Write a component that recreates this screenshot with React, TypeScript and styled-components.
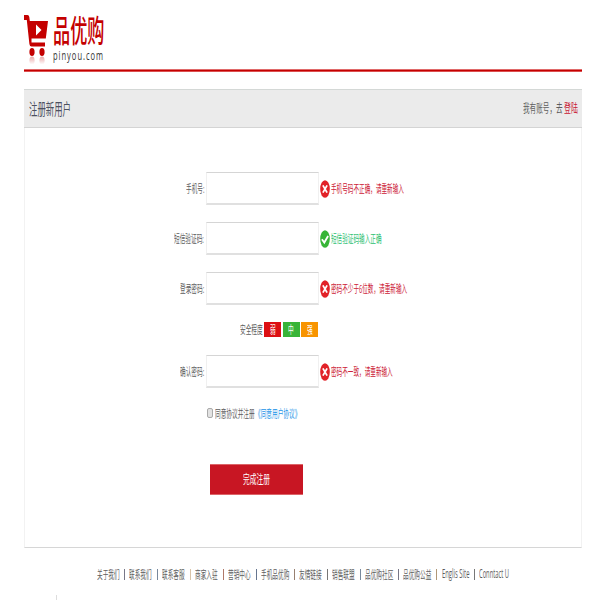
import React from "react";
import styled, { createGlobalStyle } from "styled-components";

const GlobalStyle = createGlobalStyle`
  * { box-sizing: border-box; }
  body {
    margin: 0;
    background: #fff;
    overflow: hidden;
    font-family: "Open Sans", "Noto Sans CJK SC", sans-serif;
    color: #5c5c5c;
  }
`;

const Page = styled.div`
  width: 600px;
  height: 600px;
  padding: 0 18px 0 24px;
  display: flex;
  flex-direction: column;
  overflow: hidden;
`;

/* Condensed text: the slot keeps the narrow width, the glyphs are scaled into it. */
const Slot = styled.span<{ $w: number; $size: number; $color?: string }>`
  display: block;
  flex: none;
  width: ${(p) => p.$w}px;
  height: ${(p) => p.$size + 4}px;
  line-height: ${(p) => p.$size + 4}px;
  font-size: ${(p) => p.$size}px;
  color: ${(p) => p.$color ?? "inherit"};
  white-space: nowrap;
`;

const Glyphs = styled.span<{ $scale: number }>`
  display: inline-block;
  vertical-align: top;
  transform: scaleX(${(p) => p.$scale});
  transform-origin: left center;
`;

type TextProps = { children: string; w: number; size?: number; scale?: number; color?: string };

const Narrow = ({ children, w, size = 11, scale = 0.515, color }: TextProps) => (
  <Slot $w={w} $size={size} $color={color}>
    <Glyphs $scale={scale}>{children}</Glyphs>
  </Slot>
);

const Header = styled.header`
  height: 72px;
  flex: none;
  padding-top: 14px;
  display: flex;
  border-bottom: 1px solid #dc5050;
  box-shadow: inset 0 -1px #c40000, inset 0 -2px #e06a6a;
`;

const Brand = styled.div`
  margin-left: 3.5px;
  display: flex;
  flex-direction: column;
`;

const BrandName = styled.div`
  height: 32px;
  padding-top: 2px;
  color: #c40000;
  font-weight: 500;
  span { height: 29px; line-height: 29px; }
`;

const Domain = styled.div`
  margin-top: 1px;
  letter-spacing: 1.7px;
`;

const Panel = styled.main`
  margin-top: 17px;
  height: 459px;
  flex: none;
  border: 1px solid #f2f2f2;
  border-bottom: 1px solid #d6d6d6;
  border-top: 0;
`;

const PanelHead = styled.div`
  height: 39px;
  margin: 0 -1px;
  padding: 0 4px 0 4.5px;
  display: flex;
  align-items: center;
  justify-content: space-between;
  background: #ebebeb;
  border-top: 1px solid #d4d8d6;
  border-bottom: 1px solid #d4d4d4;
`;

const Login = styled.div`
  display: flex;
  gap: 2px;
`;

const Form = styled.form`
  padding-top: 44px;
`;

const Field = styled.div<{ $gap: number }>`
  height: 33px;
  margin-bottom: ${(p) => p.$gap}px;
  display: flex;
  align-items: center;
`;

const Label = styled.label`
  width: 181px;
  padding-right: 2px;
  display: flex;
  justify-content: flex-end;
`;

const Input = styled.input`
  width: 113px;
  height: 33px;
  padding: 0 4px;
  border: 1px solid #f0f0f0;
  border-top: 1px solid #d5d5d5;
  border-bottom: 2px solid #e0e0e0;
  background: #fff;
  outline: none;
`;

const Hint = styled.div`
  margin-left: 1px;
  display: flex;
  align-items: center;
  gap: 1px;
`;

const Strength = styled.div`
  height: 15px;
  margin: 17px 0 18px;
  padding-left: 215px;
  display: flex;
  align-items: center;
`;

const Level = styled.span<{ $bg: string }>`
  width: 17px;
  height: 15px;
  margin-left: 1.5px;
  padding-left: 5.5px;
  display: flex;
  align-items: center;
  background: ${(p) => p.$bg};
`;

const Agree = styled.div`
  height: 14px;
  margin-top: 18px;
  padding-left: 182px;
  display: flex;
  align-items: center;
`;

const Check = styled.span`
  width: 6px;
  height: 10px;
  margin-right: 2px;
  border: 1px solid #aaa;
  border-radius: 2px;
  background: #e2e2e2;
`;

const Submit = styled.button`
  width: 93px;
  height: 31px;
  margin: 44px 0 0 185px;
  padding: 0;
  display: flex;
  align-items: center;
  justify-content: center;
  border: 0;
  border-top: 1px solid #dc6468;
  border-bottom: 1px solid #dc6468;
  background: #c81623;
  font-family: inherit;
  text-align: left;
`;

const Footer = styled.footer`
  margin-top: 18px;
  padding-left: 72.5px;
  display: flex;
  align-items: center;
`;

const Item = styled.div`
  display: flex;
  align-items: center;
`;

const Bar = styled.i<{ $color: string }>`
  width: 1px;
  height: 11px;
  margin: 0 4.3px 0 4.5px;
  background: ${(p) => p.$color};
`;

const Tick = styled.i`
  width: 1px;
  height: 5px;
  margin: auto 0 0 32px;
  background: #ddd;
`;

const CartLogo = () => (
  <svg width="25" height="51" viewBox="0 0 25 51">
    <defs>
      <linearGradient id="fade" x1="0" y1="0" x2="0" y2="1">
        <stop offset="0" stopColor="#c40000" stopOpacity=".35" />
        <stop offset="1" stopColor="#c40000" stopOpacity="0" />
      </linearGradient>
    </defs>
    <path d="M0 1H3.5Q5 1 5.3 3L5.8 7H24L21.8 24.5H7.5V28.5H21V32.5H7.5Q5.7 32.5 5.4 30L2.8 6H0Z" fill="#c40000" />
    <path d="M12 10.5L17.5 16L12 21.5Z" fill="#fff" />
    <ellipse cx="8" cy="38" rx="2.6" ry="4.1" fill="#c40000" />
    <ellipse cx="18" cy="38" rx="2.6" ry="4.1" fill="#c40000" />
    <ellipse cx="8" cy="46.5" rx="2.6" ry="4" fill="url(#fade)" />
    <ellipse cx="18" cy="46.5" rx="2.6" ry="4" fill="url(#fade)" />
  </svg>
);

const StatusIcon = ({ ok }: { ok?: boolean }) => (
  <svg width="10" height="18" viewBox="0 0 10 18">
    <ellipse cx="5" cy="9" rx="4.8" ry="8.8" fill={ok ? "#36b536" : "#e12228"} />
    <path
      d={ok ? "M1.9 9.2L4.3 12.5L8.1 6" : "M2.9 5.4L7.1 12.6M7.1 5.4L2.9 12.6"}
      fill="none"
      stroke="#fff"
      strokeWidth="1.8"
    />
  </svg>
);

type RowProps = { label: string; labelWidth: number; hint: string; hintWidth: number; ok?: boolean; gap: number };

const FormRow = ({ label, labelWidth, hint, hintWidth, ok, gap }: RowProps) => (
  <Field $gap={gap}>
    <Label>
      <Narrow w={labelWidth}>{label}</Narrow>
    </Label>
    <Input />
    <Hint>
      <StatusIcon ok={ok} />
      <Narrow w={hintWidth} scale={0.51} color={ok ? "#2cc070" : "#cc1834"}>{hint}</Narrow>
    </Hint>
  </Field>
);

const links = [
  { text: "关于我们", w: 23, bar: "#778" },
  { text: "联系我们", w: 23.2, bar: "#78889c" },
  { text: "联系客服", w: 23, bar: "#d8c3a8" },
  { text: "商家入驻", w: 23.2, bar: "#b07868" },
  { text: "营销中心", w: 23, bar: "#667690" },
  { text: "手机品优购", w: 28.7, bar: "#988070" },
  { text: "友情链接", w: 23, bar: "#777" },
  { text: "销售联盟", w: 23, bar: "#78889c" },
  { text: "品优购社区", w: 28.5, bar: "#778" },
  { text: "品优购公益", w: 28.5, bar: "#b09878" },
  { text: "Englis Site", w: 27.7, bar: "#777", scale: 0.49, size: 12 },
  { text: "Conntact U", w: 30, scale: 0.48, size: 12 },
];

export default function App() {
  return (
    <>
      <GlobalStyle />
      <Page>
        <Header>
          <CartLogo />
          <Brand>
            <BrandName>
              <Narrow w={51} size={31} scale={0.553}>品优购</Narrow>
            </BrandName>
            <Domain>
              <Narrow w={51} size={13} scale={0.58} color="#333">pinyou.com</Narrow>
            </Domain>
          </Brand>
        </Header>
        <Panel>
          <PanelHead>
            <Narrow w={42} size={16} scale={0.525} color="#4c5060">注册新用户</Narrow>
            <Login>
              <Narrow w={39} size={12} scale={0.55}>我有账号，去</Narrow>
              <Narrow w={14} size={12} scale={0.58} color="#c81632">登陆</Narrow>
            </Login>
          </PanelHead>
          <Form>
            <FormRow label="手机号:" labelWidth={18.5} hint="手机号码不正确，请重新输入" hintWidth={74} gap={17} />
            <FormRow label="短信验证码:" labelWidth={29.8} hint="短信验证码输入正确" hintWidth={51} ok gap={17} />
            <FormRow label="登录密码:" labelWidth={24.2} hint="密码不少于6位数，请重新输入" hintWidth={77} gap={0} />
            <Strength>
              <Narrow w={22.5}>安全程度</Narrow>
              <Level $bg="#dc1014"><Narrow w={6} color="#fff">弱</Narrow></Level>
              <Level $bg="#38b438"><Narrow w={6} color="#fff">中</Narrow></Level>
              <Level $bg="#f89400"><Narrow w={6} color="#fff">强</Narrow></Level>
            </Strength>
            <FormRow label="确认密码:" labelWidth={24.2} hint="密码不一致，请重新输入" hintWidth={63} gap={0} />
            <Agree>
              <Check />
              <Narrow w={39.5}>同意协议并注册</Narrow>
              <Narrow w={46} color="#1c94e8">《同意用户协议》</Narrow>
            </Agree>
            <Submit type="button">
              <Narrow w={27} size={12} scale={0.56} color="#fff">完成注册</Narrow>
            </Submit>
          </Form>
        </Panel>
        <Footer>
          {links.map((l) => (
            <Item key={l.text}>
              <Narrow w={l.w} size={l.size} scale={l.scale}>{l.text}</Narrow>
              {l.bar && <Bar $color={l.bar} />}
            </Item>
          ))}
        </Footer>
        <Tick />
      </Page>
    </>
  );
}
